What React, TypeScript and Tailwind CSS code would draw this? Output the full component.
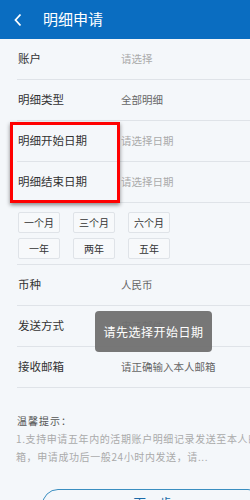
import React from "react";

const font = { fontFamily: '"Noto Sans CJK SC", "Noto Sans", sans-serif' };

function Row({ label, value, light }: { label: string; value: string; light?: boolean }) {
  return (
    <div className="ml-[17px] h-[41px] flex items-center border-b border-[#dfe3e8]">
      <div className="w-[104px] pl-[1px] text-[11.5px] text-[#333]">{label}</div>
      <div className={"text-[10.5px] " + (light ? "text-[#aaa]" : "text-[#666]")}>{value}</div>
    </div>
  );
}

function Btn({ t }: { t: string }) {
  return (
    <div className="w-[42px] h-[21px] flex items-center justify-center border border-[#dfe3e8] rounded-[2px] bg-[#f7f9fb] text-[10px] text-[#333]">
      {t}
    </div>
  );
}

export default function App() {
  return (
    <div className="relative w-[250px] h-[500px] overflow-hidden bg-[#f4f7fa]" style={font}>
      <div className="h-[39px] bg-[#0a6dc1] flex items-center">
        <svg width="10" height="14" viewBox="0 0 10 14" className="ml-[13px]">
          <path d="M7.5 1.5 L2.5 7 L7.5 12.5" stroke="white" strokeWidth="1.8" fill="none" />
        </svg>
        <div className="ml-[20px] text-[15px] text-white">明细申请</div>
      </div>
      <Row label="账户" value="请选择" light />
      <Row label="明细类型" value="全部明细" />
      <Row label="明细开始日期" value="请选择日期" light />
      <Row label="明细结束日期" value="请选择日期" light />
      <div className="ml-[17px] border-b border-[#dfe3e8] pt-[9px] pb-[5px] pl-[1px]">
        <div className="flex gap-[13px]">
          <Btn t="一个月" />
          <Btn t="三个月" />
          <Btn t="六个月" />
        </div>
        <div className="flex gap-[13px] mt-[5px]">
          <Btn t="一年" />
          <Btn t="两年" />
          <Btn t="五年" />
        </div>
      </div>
      <Row label="币种" value="人民币" />
      <Row label="发送方式" value="电子邮件" />
      <Row label="接收邮箱" value="请正确输入本人邮箱" />
      <div className="pl-[17px] pt-[25px] text-[10px] text-[#555] tracking-[1px]">温馨提示：</div>
      <div className="pl-[16px] pt-[2px] text-[10px] leading-[18px] text-[#aaa] whitespace-nowrap tracking-[0.6px]">
        <div>1.支持申请五年内的活期账户明细记录发送至本人邮</div>
        <div>箱，申请成功后一般24小时内发送，请...</div>
      </div>
      <div className="mt-[23px] ml-[42px] w-[222px] h-[34px] shrink-0 rounded-[16px] border border-[#3a8ec0] flex justify-center pt-[5px] text-[12.5px] leading-[16px] text-[#1a6aa8] tracking-[0.5px]">
        下一步
      </div>
      <div className="absolute left-[10px] top-[122px] w-[110px] h-[81px] border-[3px] border-[#ff0000] shadow-[0_2px_4px_rgba(0,0,0,0.45)]" />
      <div className="absolute left-[95px] top-[311px] w-[117px] h-[41px] rounded-[4px] bg-[#707070]/95 flex items-center justify-center text-[12px] text-white tracking-[0.5px]">
        请先选择开始日期
      </div>
    </div>
  );
}
